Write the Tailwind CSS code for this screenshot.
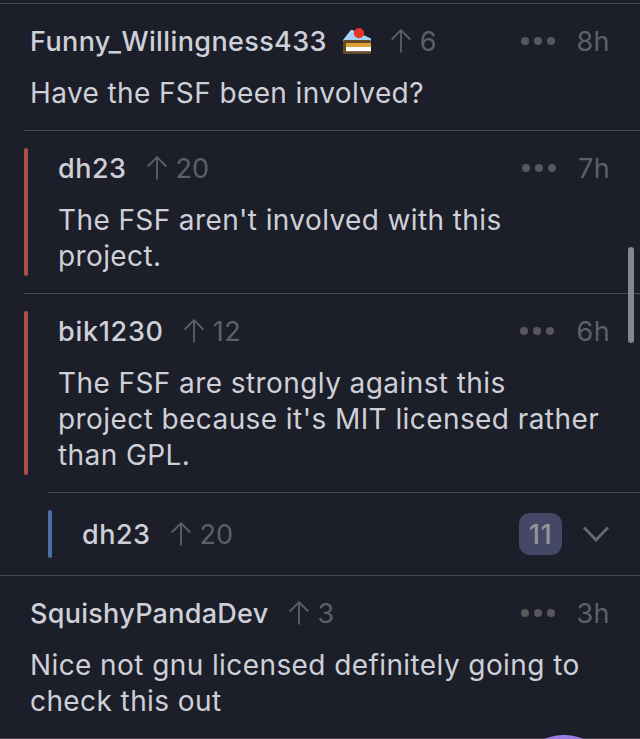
<!DOCTYPE html>
<html lang="en">
<head>
<meta charset="utf-8">
<title>Comments</title>
<script src="https://cdn.jsdelivr.net/npm/@tailwindcss/browser@4"></script>
</head>
<body class="bg-[#1c1e29]">
<svg class="hidden">
  <symbol id="up" viewBox="0 0 20 24"><path d="M10 23.5V1M.7 10.5 10 1.2l9.300 9.300" fill="none" stroke="currentColor" stroke-width="1.8"/></symbol>
  <symbol id="dots" viewBox="0 0 34 8"><g fill="#58585c"><circle cx="4" cy="4" r="4"/><circle cx="17" cy="4" r="4"/><circle cx="30" cy="4" r="4"/></g></symbol>
</svg>
<main class="relative w-[640px] h-[739px] overflow-hidden pt-[3px] font-['Inter',sans-serif] text-[28px] leading-[36px] text-[#cfd0d7]">
  <article class="border-t border-[#4a4b56] pt-[19px] pb-[19px] pl-[30px] pr-[30px]">
    <header class="flex items-center h-9 text-[27px]">
      <h2 class="pt-0.5 font-medium tracking-[0.38px]">Funny_Willingness433</h2>
      <svg class="ml-[16px] w-[28px] h-[26px] shrink-0" viewBox="0 0 28 26"><path d="M0 12 7 3Q8.500 1 10.500 2.500L28 10.500V13H0z" fill="#a5d3f8"/><rect y="12" width="28" height="14" rx="1.500" fill="#65492b"/><rect x="3" y="15" width="25" height="4.300" fill="#dfa33b"/><rect x="3" y="19" width="25" height="4.200" fill="#fff"/><circle cx="16" cy="5.200" r="5.100" fill="#e73425"/></svg>
      <svg class="ml-[20px] w-5 h-6 text-[#5e5f69]"><use href="#up"/></svg>
      <span class="pt-0.5 ml-[9px] text-[#5e5f69]">6</span>
      <svg class="ml-auto w-[34px] h-2"><use href="#dots"/></svg>
      <span class="pt-0.5 ml-[22px] tracking-[0.4px] text-[#5e5f69]">8h</span>
    </header>
    <p class="mt-4 tracking-[0.39px]">Have the FSF been involved?</p>
  </article>
  <article class="relative ml-6 border-t border-[#4a4b56] pt-[19px] pb-[19px] pl-[34px] pr-[30px]">
    <i class="absolute left-0 top-[17px] bottom-[17px] w-1 rounded-full bg-[#a95248]"></i>
    <header class="flex items-center h-9 text-[27px]">
      <h2 class="pt-0.5 font-medium tracking-[0.5px]">dh23</h2>
      <svg class="ml-[20px] w-5 h-6 text-[#5e5f69]"><use href="#up"/></svg>
      <span class="pt-0.5 ml-[9px] text-[#5e5f69]">20</span>
      <svg class="ml-auto w-[34px] h-2"><use href="#dots"/></svg>
      <span class="pt-0.5 ml-[22px] tracking-[0.4px] text-[#5e5f69]">7h</span>
    </header>
    <p class="mt-4 tracking-[0.39px]">The FSF aren't involved with this<br>project.</p>
  </article>
  <article class="relative ml-6 border-t border-[#4a4b56] pt-[19px] pb-[19px] pl-[34px] pr-[30px]">
    <i class="absolute left-0 top-[17px] bottom-[17px] w-1 rounded-full bg-[#a95248]"></i>
    <header class="flex items-center h-9 text-[27px]">
      <h2 class="pt-0.5 font-medium tracking-[0.7px]">bik1230</h2>
      <svg class="ml-[20px] w-5 h-6 text-[#5e5f69]"><use href="#up"/></svg>
      <span class="pt-0.5 ml-[9px] tracking-[0.5px] text-[#5e5f69]">12</span>
      <svg class="ml-auto w-[34px] h-2"><use href="#dots"/></svg>
      <span class="pt-0.5 ml-[22px] tracking-[0.4px] text-[#5e5f69]">6h</span>
    </header>
    <p class="mt-4 tracking-[0.42px] whitespace-nowrap">The FSF are strongly against this<br>project because it's MIT licensed rather<br>than GPL.</p>
  </article>
  <article class="relative ml-12 border-t border-[#4a4b56] h-[83px] pl-[34px] pr-[31px] flex items-center text-[27px]">
    <i class="absolute left-0 top-[17px] bottom-[17px] w-1 rounded-full bg-[#4d6fa8]"></i>
    <h2 class="pt-0.5 font-medium tracking-[0.5px]">dh23</h2>
    <svg class="ml-[20px] w-5 h-6 text-[#5e5f69]"><use href="#up"/></svg>
    <span class="pt-0.5 ml-[9px] text-[#5e5f69]">20</span>
    <span class="ml-auto w-[43px] h-[42px] rounded-[11px] bg-[#444766] text-[#94959f] font-medium pt-0.5 tracking-[0.5px] flex items-center justify-center">11</span>
    <svg class="ml-[21px] w-[26px] h-[16px]" viewBox="0 0 26 16"><path d="M1 1.500 13 14 25 1.500" fill="none" stroke="#6a6a6e" stroke-width="2.600"/></svg>
  </article>
  <article class="border-t border-b border-[#4a4b56] pt-[19px] pb-[19px] pl-[30px] pr-[30px]">
    <header class="flex items-center h-9 text-[27px]">
      <h2 class="pt-0.5 font-medium tracking-[0.28px]">SquishyPandaDev</h2>
      <svg class="ml-[20px] w-5 h-6 text-[#5e5f69]"><use href="#up"/></svg>
      <span class="pt-0.5 ml-[9px] text-[#5e5f69]">3</span>
      <svg class="ml-auto w-[34px] h-2"><use href="#dots"/></svg>
      <span class="pt-0.5 ml-[22px] tracking-[0.4px] text-[#5e5f69]">3h</span>
    </header>
    <p class="mt-4 tracking-[0.41px]">Nice not gnu licensed definitely going to<br>check this out</p>
  </article>
  <div class="absolute left-[628px] top-[247px] w-[6px] h-[96px] rounded-full bg-[#8c8c94]/95"></div>
  <div class="absolute left-[514px] top-[735px] w-[100px] h-[100px] rounded-full bg-[#9b7fe6]"></div>
</main>
</body>
</html>
